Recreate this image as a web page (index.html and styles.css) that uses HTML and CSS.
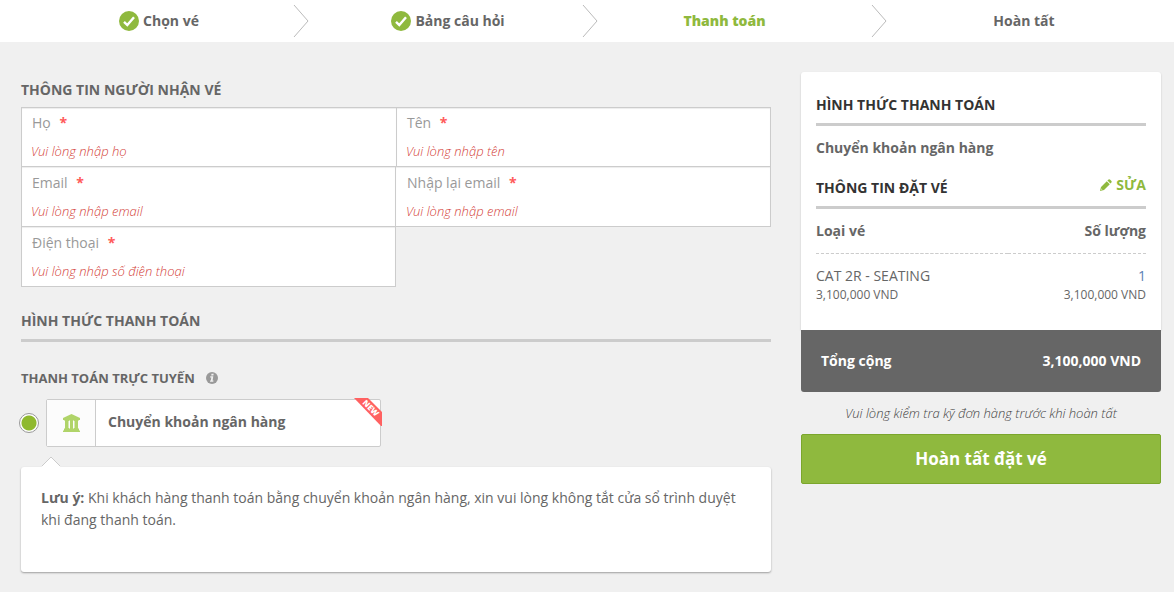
FILE: index.html
```html
<!DOCTYPE html>
<html lang="vi">
<head>
<meta charset="utf-8">
<meta name="viewport" content="width=device-width, initial-scale=1">
<title>Thanh toán</title>
<link rel="stylesheet" href="styles.css">
</head>
<body>
<header class="topbar">
  <ol class="steps">
    <li class="step step-done">
      <svg class="step-check" viewBox="0 0 20 20" aria-hidden="true"><circle cx="10" cy="10" r="10" fill="#8fb93e"/><path d="M5 10.8l3.3 3.2L15 6.2" fill="none" stroke="#fff" stroke-width="2.4"/></svg>
      <span>Chọn vé</span>
      <svg class="step-arrow" viewBox="0 0 16 34" aria-hidden="true"><path d="M1 1l14 16L1 33" fill="none" stroke="#bbb"/></svg>
    </li>
    <li class="step step-done">
      <svg class="step-check" viewBox="0 0 20 20" aria-hidden="true"><circle cx="10" cy="10" r="10" fill="#8fb93e"/><path d="M5 10.8l3.3 3.2L15 6.2" fill="none" stroke="#fff" stroke-width="2.4"/></svg>
      <span>Bảng câu hỏi</span>
      <svg class="step-arrow" viewBox="0 0 16 34" aria-hidden="true"><path d="M1 1l14 16L1 33" fill="none" stroke="#bbb"/></svg>
    </li>
    <li class="step step-current" aria-current="step">
      <span>Thanh toán</span>
      <svg class="step-arrow" viewBox="0 0 16 34" aria-hidden="true"><path d="M1 1l14 16L1 33" fill="none" stroke="#bbb"/></svg>
    </li>
    <li class="step step-last"><span>Hoàn tất</span></li>
  </ol>
</header>

<form class="checkout">
  <main class="details">
    <h2 class="heading">THÔNG TIN NGƯỜI NHẬN VÉ</h2>
    <div class="fields">
      <div class="field field-top field-start">
        <div class="field-line"><label for="last-name">Họ <b class="required">*</b></label><input id="last-name" type="text"></div>
        <p class="error">Vui lòng nhập họ</p>
      </div>
      <div class="field field-top">
        <div class="field-line"><label for="first-name">Tên <b class="required">*</b></label><input id="first-name" type="text"></div>
        <p class="error">Vui lòng nhập tên</p>
      </div>
      <div class="field">
        <div class="field-line"><label for="email">Email <b class="required">*</b></label><input id="email" type="email"></div>
        <p class="error">Vui lòng nhập email</p>
      </div>
      <div class="field field-end">
        <div class="field-line"><label for="email-again">Nhập lại email <b class="required">*</b></label><input id="email-again" type="email"></div>
        <p class="error">Vui lòng nhập email</p>
      </div>
      <div class="field">
        <div class="field-line"><label for="phone">Điện thoại <b class="required">*</b></label><input id="phone" type="tel"></div>
        <p class="error">Vui lòng nhập số điện thoại</p>
      </div>
    </div>

    <h2 class="heading heading-ruled">HÌNH THỨC THANH TOÁN</h2>
    <h3 class="subheading">THANH TOÁN TRỰC TUYẾN
      <svg class="info" viewBox="0 0 12 12" aria-hidden="true"><circle cx="6" cy="6" r="6" fill="#999"/><path d="M5.500 1.800h2.200l-.3 1.800H5.200zM4.300 4.300h3L6.600 8.500h.9l-.2 1.200H4l.2-1.200h.6l.5-3h-1.200z" fill="#f0f0f0"/></svg>
    </h3>
    <div class="method">
      <input class="radio" id="bank" type="radio" name="method" checked>
      <label class="method-box" for="bank">
        <span class="method-icon">
          <svg class="bank" viewBox="0 0 17 18" aria-hidden="true"><path d="M8.500 0L17 4v2H0V4zM1.500 6H6v1h-.5v7H6v1H1.500v-1H2V7h-.5zM6.500 6h4v1H10v7h.5v1h-4v-1H7V7h-.5zM11 6h4.500v1H15v7h.5v1H11v-1h.5V7H11zM1 15h15v1.500H1zM0 16.500h17V18H0z" fill="#b0d469"/></svg>
        </span>
        <span class="method-name">Chuyển khoản ngân hàng</span>
        <svg class="ribbon" viewBox="0 0 28 28" aria-hidden="true"><path d="M0 0h14l14 14v15z" fill="#ff6161"/><text class="ribbon-text" x="17" y="13" transform="rotate(45 17 10)">NEW</text></svg>
      </label>
    </div>
    <div class="note">
      <svg class="note-tip" viewBox="0 0 20 12" aria-hidden="true"><path d="M1 10l9-9 9 9v2H1z" fill="#fff"/><path d="M1 10l9-9 9 9" fill="none" stroke="#ccc"/></svg>
      <p><b>Lưu ý:</b> Khi khách hàng thanh toán bằng chuyển khoản ngân hàng, xin vui lòng không tắt cửa sổ trình duyệt khi đang thanh toán.</p>
    </div>
  </main>

  <aside class="summary">
    <div class="card">
      <h2 class="card-heading">HÌNH THỨC THANH TOÁN</h2>
      <p class="chosen">Chuyển khoản ngân hàng</p>
      <div class="card-heading card-heading-row">
        <h2>THÔNG TIN ĐẶT VÉ</h2>
        <a class="edit" href="#edit">
          <svg class="pencil" viewBox="0 0 12 12" aria-hidden="true"><path d="M8.200.8q1-1 2 0l1 1q1 1 0 2l-.8.800L7.400 1.600zM6.800 2.200l3 3L4 11l-4 1 1-4zM1.500 9.600l-.3 1.200 1.200-.3z" fill="#8fb93e" fill-rule="evenodd"/></svg>
          SỬA</a>
      </div>
      <table class="tickets">
        <thead><tr><th>Loại vé</th><th class="right">Số lượng</th></tr></thead>
        <tbody><tr>
          <td>CAT 2R - SEATING<small>3,100,000 VND</small></td>
          <td class="right"><span class="count">1</span><small>3,100,000 VND</small></td>
        </tr></tbody>
      </table>
    </div>
    <div class="total"><span>Tổng cộng</span><span>3,100,000 VND</span></div>
    <p class="reminder">Vui lòng kiểm tra kỹ đơn hàng trước khi hoàn tất</p>
    <button class="submit" type="submit">Hoàn tất đặt vé</button>
  </aside>
</form>
</body>
</html>
```

FILE: styles.css
```css
*,
*::before,
*::after {
  box-sizing: border-box;
}

body {
  margin: 0;
  background: #f0f0f0;
  color: #666;
  font: 14px/22px "Open Sans", "Noto Sans", sans-serif;
}

h2,
h3,
p {
  margin: 0;
}

/* Progress steps */
.topbar {
  padding: 0 13px 0 20px;
  background: #fff;
}

.steps {
  display: grid;
  grid-template-columns: 289fr 289fr 289fr 274fr;
  margin: 0;
  padding: 0;
  list-style: none;
}

.step {
  position: relative;
  display: flex;
  align-items: center;
  justify-content: center;
  gap: 4px;
  height: 42px;
  padding-right: 36px;
  font-weight: 700;
}

.step-done {
  padding-right: 11px;
}

.step-last {
  padding-right: 0;
}

.step-current {
  color: #8fb93e;
  font-weight: 800;
}

.step-check {
  width: 20px;
  height: 20px;
}

.step-arrow {
  position: absolute;
  top: 4px;
  right: 0;
  width: 16px;
  height: 34px;
}

/* Page columns */
.checkout {
  display: grid;
  grid-template-columns: minmax(0, 1fr) 360px;
  gap: 30px;
  align-items: start;
  padding: 30px 13px 20px 21px;
}

.details {
  padding-top: 7px;
}

.heading {
  font-size: 14px;
  line-height: 22px;
  font-weight: 700;
}

.heading-ruled {
  margin-top: 23px;
  padding-bottom: 7px;
  border-bottom: 3px solid #ccc;
}

/* Recipient fields */
.fields {
  display: grid;
  grid-template-columns: 1fr 1fr;
  margin-top: 6px;
}

.field {
  padding: 5px 10px 4px 9px;
  border: solid #ccc;
  border-width: 0 1px 1px;
  background: #fff;
  box-shadow: inset 0 1px 1px rgba(0, 0, 0, 0.075);
}

.field-top {
  padding-top: 4px;
  border-top-width: 1px;
}

.field-start {
  border-right-width: 0;
}

.field-end {
  border-left-width: 0;
  padding-left: 10px;
}

.field-line {
  display: flex;
  gap: 8px;
  padding-left: 1px;
  color: #999;
}

.required {
  margin-left: 5px;
  color: #ff5a5a;
}

.field input {
  flex: 1;
  min-width: 0;
  height: 22px;
  padding: 0;
  border: 0;
  outline: 0;
  background: transparent;
  color: #666;
  font: inherit;
}

.error {
  padding-top: 6px;
  color: #d43f3a;
  font-size: 13px;
  font-style: italic;
  font-weight: 300;
}

/* Payment method */
.subheading {
  display: flex;
  align-items: center;
  gap: 11px;
  margin-top: 25px;
  font-size: 13px;
  line-height: 22px;
  font-weight: 700;
}

.info {
  width: 12px;
  height: 12px;
}

.method {
  display: flex;
  align-items: center;
  gap: 7px;
  margin: 10px 0 0 -2px;
}

.radio {
  appearance: none;
  flex: none;
  width: 20px;
  height: 20px;
  margin: 0;
  border: 1px solid #999;
  border-radius: 50%;
  background: #fff;
}

.radio:checked {
  background: radial-gradient(circle, #8fb92e 7px, #fff 8px);
}

.method-box {
  position: relative;
  display: flex;
  width: 335px;
  height: 48px;
  border: 1px solid #ccc;
  border-radius: 2px;
  background: #fff;
  line-height: 44px;
  font-weight: 700;
}

.method-icon {
  display: flex;
  align-items: center;
  justify-content: center;
  width: 49px;
  border-right: 1px solid #ccc;
  background: #fcfcfc;
}

.bank {
  width: 17px;
  height: 18px;
}

.method-name {
  padding-left: 12px;
}

.ribbon {
  position: absolute;
  top: -2px;
  right: -2px;
  width: 28px;
  height: 28px;
}

.ribbon-text {
  fill: #fff;
  font-size: 8px;
  font-weight: 800;
  text-anchor: middle;
}

.note {
  position: relative;
  min-height: 105px;
  margin-top: 20px;
  padding: 20px;
  border-radius: 3px;
  background: #fff;
  box-shadow: 0 1px 2px rgba(0, 0, 0, 0.35);
}

.note-tip {
  position: absolute;
  top: -11px;
  left: 20px;
  width: 20px;
  height: 12px;
}

/* Order summary */
.card {
  padding: 22px 15px 27px;
  border-radius: 3px 3px 0 0;
  background: #fff;
  box-shadow: 0 1px 2px rgba(0, 0, 0, 0.2);
}

.card-heading {
  padding-bottom: 7px;
  border-bottom: 3px solid #ccc;
  color: #333;
  font-size: 14px;
  line-height: 22px;
  font-weight: 700;
}

.card-heading-row {
  display: flex;
  justify-content: space-between;
  margin-top: 18px;
}

.card-heading-row h2 {
  font-size: 14px;
}

.edit {
  display: flex;
  align-items: center;
  gap: 4px;
  margin: -3px 0 3px;
  color: #8fb93e;
  text-decoration: none;
}

.pencil {
  width: 12px;
  height: 12px;
}

.chosen {
  padding-top: 11px;
  font-weight: 700;
}

.tickets {
  width: 100%;
  border-collapse: collapse;
}

.tickets th,
.tickets td {
  padding: 11px 0;
  text-align: left;
}

.tickets th {
  border-bottom: 1px dashed #ccc;
}

.tickets td {
  padding: 11px 0 0;
}

.tickets .right {
  text-align: right;
}

.tickets small {
  display: block;
  font-size: 12px;
  line-height: 16px;
}

.count {
  color: #5a7fb5;
}

.total {
  position: relative;
  display: flex;
  justify-content: space-between;
  padding: 20px;
  border-radius: 0 0 3px 3px;
  background: #666;
  color: #fff;
  font-weight: 700;
}

.reminder {
  padding: 10px 0;
  color: #444;
  font-size: 13px;
  font-style: italic;
  font-weight: 300;
  text-align: center;
}

.submit {
  display: block;
  width: 100%;
  padding: 13px;
  border: 1px solid #7ba62c;
  border-radius: 2px;
  background: #8fb93e;
  color: #fff;
  font: 700 17px/22px "Open Sans", "Noto Sans", sans-serif;
}
```
